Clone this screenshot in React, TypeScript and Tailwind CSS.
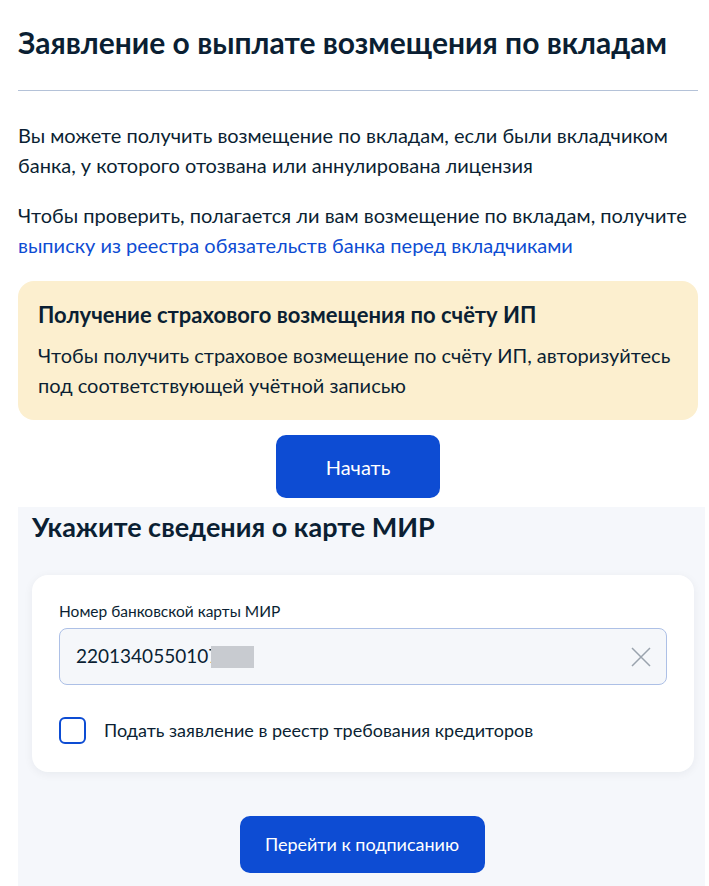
import React from "react";

export default function App() {
  return (
    <div className="w-[709px] min-h-[886px] bg-white text-[#0b1f33]" style={{ fontFamily: "Lato, 'Noto Sans', sans-serif" }}>
      <div className="px-[18px] pt-[22px]">
        <h1 className="text-[30px] leading-[40px] font-bold">Заявление о выплате возмещения по вкладам</h1>
        <div className="mt-[28px] h-px bg-[#b4c2d8] mr-[-7px]" />
        <p className="mt-[29px] text-[20px] leading-[30px]">
          Вы можете получить возмещение по вкладам, если были вкладчиком банка, у которого отозвана или аннулирована лицензия
        </p>
        <p className="mt-[20px] text-[20px] leading-[30px]">
          Чтобы проверить, полагается ли вам возмещение по вкладам, получите{" "}
          <span className="text-[#0d4cd3]">выписку из реестра обязательств банка перед вкладчиками</span>
        </p>
        <div className="mt-[21px] mr-[-7px] rounded-[16px] bg-[#fcefcf] px-[20px] pt-[19px] pb-[20px]">
          <div className="text-[22px] leading-[30px] font-bold">Получение страхового возмещения по счёту ИП</div>
          <div className="mt-[10px] text-[20px] leading-[30px]">
            Чтобы получить страховое возмещение по счёту ИП, авторизуйтесь под соответствующей учётной записью
          </div>
        </div>
        <div className="mt-[15px] flex justify-center">
          <button className="w-[164px] h-[63px] rounded-[10px] bg-[#0d4cd3] text-white text-[20px] ml-[7px]">Начать</button>
        </div>
      </div>
      <div className="mt-[9px] ml-[18px] mr-[4px] bg-[#f5f7fb] px-[14px] pt-[2px] pb-[14px]">
        <h2 className="text-[27px] leading-[36px] font-bold">Укажите сведения о карте МИР</h2>
        <div className="mt-[30px] rounded-[16px] bg-white shadow-[0_2px_10px_rgba(11,31,51,0.06)] px-[27px] pt-[26px] pb-[28px] mr-[-3px]">
          <div className="text-[15.5px] leading-[20px]">Номер банковской карты МИР</div>
          <div className="mt-[7px] h-[57px] rounded-[8px] border border-[#adc0e6] bg-[#f5f7fa] flex items-center pl-[16px] pr-[14px]">
            <span className="text-[19px]">2201340550107</span>
            <span className="w-[43px] h-[22px] bg-[#c8cbd0] -ml-[8px] blur-[0.5px]" />
            <div className="flex-1" />
            <svg width="22" height="22" viewBox="0 0 22 22" fill="none">
              <path d="M2 2 L20 20 M20 2 L2 20" stroke="#9aa3ad" strokeWidth="1.5" />
            </svg>
          </div>
          <div className="mt-[32px] flex items-center">
            <div className="w-[27px] h-[27px] rounded-[6px] border-2 border-[#0d4cd3] bg-white" />
            <span className="ml-[18px] text-[18px]">Подать заявление в реестр требования кредиторов</span>
          </div>
        </div>
        <div className="mt-[44px] flex justify-center">
          <button className="w-[245px] h-[57px] rounded-[10px] bg-[#0d4cd3] text-white text-[18px] ml-[1px]">Перейти к подписанию</button>
        </div>
      </div>
    </div>
  );
}
